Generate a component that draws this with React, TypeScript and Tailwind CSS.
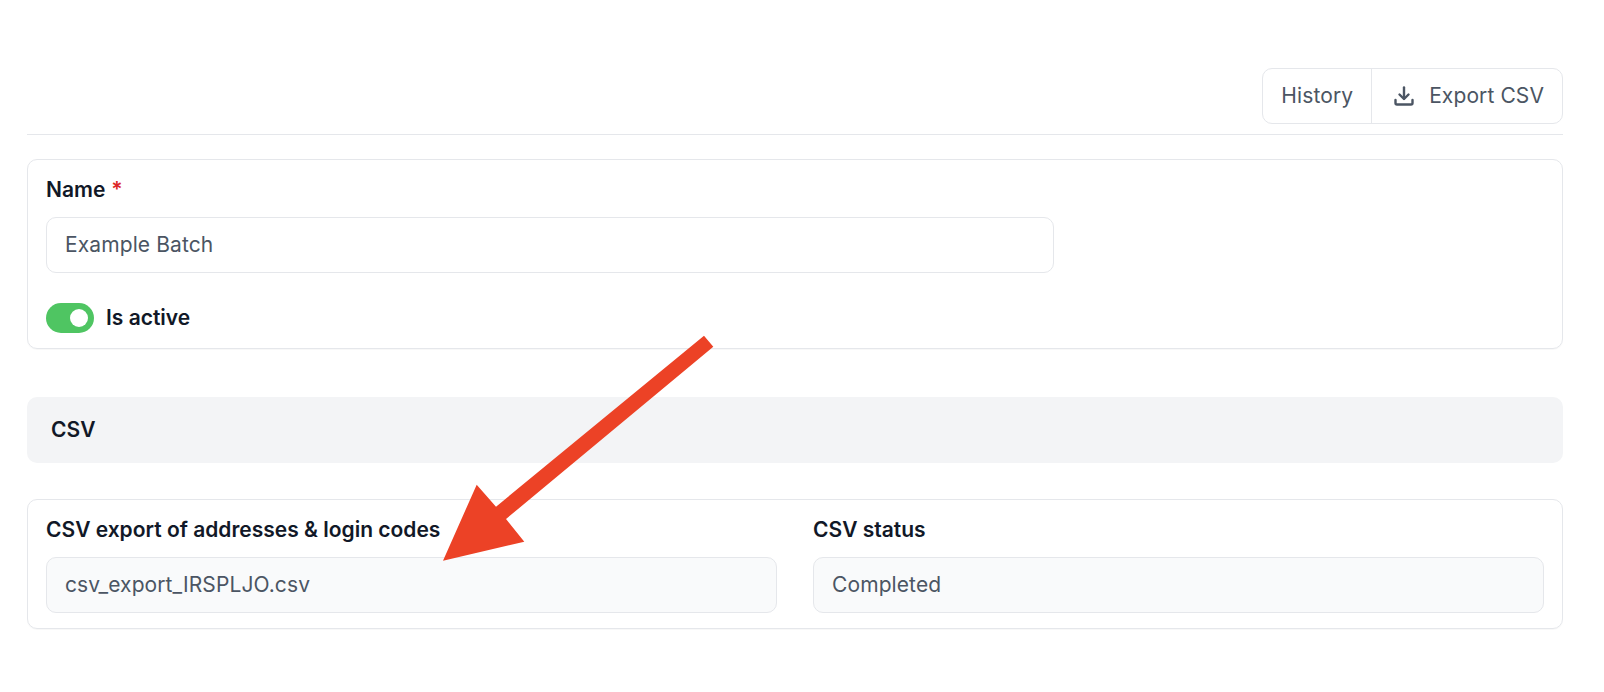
import React from 'react';

function Field({ label, value, required, readOnly }: { label: string; value: string; required?: boolean; readOnly?: boolean }) {
  return (
    <div className="flex flex-col">
      <div className="h-[27px] flex items-center text-[21px] font-semibold text-[#111827] leading-[27px]">
        {label}
        {required && <span className="ml-[6px] text-[#dc2626]">*</span>}
      </div>
      <div
        className={`mt-[14px] h-[56px] flex items-center px-[18px] rounded-[10px] border border-[#e5e7eb] text-[21px] tracking-[0.1px] text-[#4b5563] ${
          readOnly ? 'bg-[#f9fafb]' : 'bg-white'
        }`}
      >
        {value}
      </div>
    </div>
  );
}

function DownloadIcon() {
  return (
    <svg className="w-[24px] h-[24px]" viewBox="0 0 24 24" fill="none" stroke="currentColor" strokeWidth="2.4" strokeLinecap="round" strokeLinejoin="round">
      <path d="M12 3.5v11" />
      <path d="M7.5 10.5l4.5 4.5 4.5-4.5" />
      <path d="M3.5 16v3a1.5 1.5 0 0 0 1.5 1.5h14a1.5 1.5 0 0 0 1.5-1.5v-3" />
    </svg>
  );
}

export default function App() {
  return (
    <div className="relative w-[1604px] h-[692px] bg-white overflow-hidden font-['Inter',sans-serif]">
      <div className="pt-[68px] pl-[27px] pr-[41px]">
        {/* Header */}
        <div className="flex justify-end pb-[10px] border-b border-[#e5e7eb]">
          <div className="flex h-[56px] rounded-[10px] border border-[#e5e7eb] text-[21px] font-normal tracking-[0.1px] text-[#4b5563]">
            <div className="flex items-center px-[18px] border-r border-[#e5e7eb]">History</div>
            <div className="flex items-center gap-[13px] pl-[20px] pr-[18px]">
              <DownloadIcon />
              <span>Export CSV</span>
            </div>
          </div>
        </div>

        {/* Name card */}
        <div className="mt-[24px] h-[190px] rounded-[10px] border border-[#e5e7eb] pt-[16px] px-[18px] shadow-[0_1px_1px_rgba(0,0,0,0.03)]">
          <div className="w-[1008px]">
            <Field label="Name" value="Example Batch" required />
          </div>
          <div className="mt-[29px] flex items-center gap-[12px]">
            <div className="w-[48px] h-[30px] rounded-full bg-[#4fc562] flex items-center justify-end pr-[6px]">
              <div className="w-[18px] h-[18px] rounded-full bg-white" />
            </div>
            <span className="text-[21px] font-semibold text-[#111827]">Is active</span>
          </div>
        </div>

        {/* Section heading */}
        <div className="mt-[48px] h-[66px] rounded-[10px] bg-[#f3f4f6] flex items-center px-[24px] text-[21px] font-semibold text-[#111827]">
          CSV
        </div>

        {/* CSV card */}
        <div className="mt-[36px] h-[130px] rounded-[10px] border border-[#e5e7eb] pt-[16px] px-[18px] grid grid-cols-2 gap-x-[36px] shadow-[0_1px_1px_rgba(0,0,0,0.03)]">
          <Field label="CSV export of addresses & login codes" value="csv_export_IRSPLJO.csv" readOnly />
          <Field label="CSV status" value="Completed" readOnly />
        </div>
      </div>

      {/* Annotation arrow */}
      <svg className="absolute left-0 top-0 pointer-events-none" width="1604" height="692" viewBox="0 0 1604 692">
        <polygon
          points="704,335.7 713.3,346.7 506,519 524.3,541.7 443,560.7 476.7,484.7 496,506.7"
          fill="#ec4226"
        />
      </svg>
    </div>
  );
}
